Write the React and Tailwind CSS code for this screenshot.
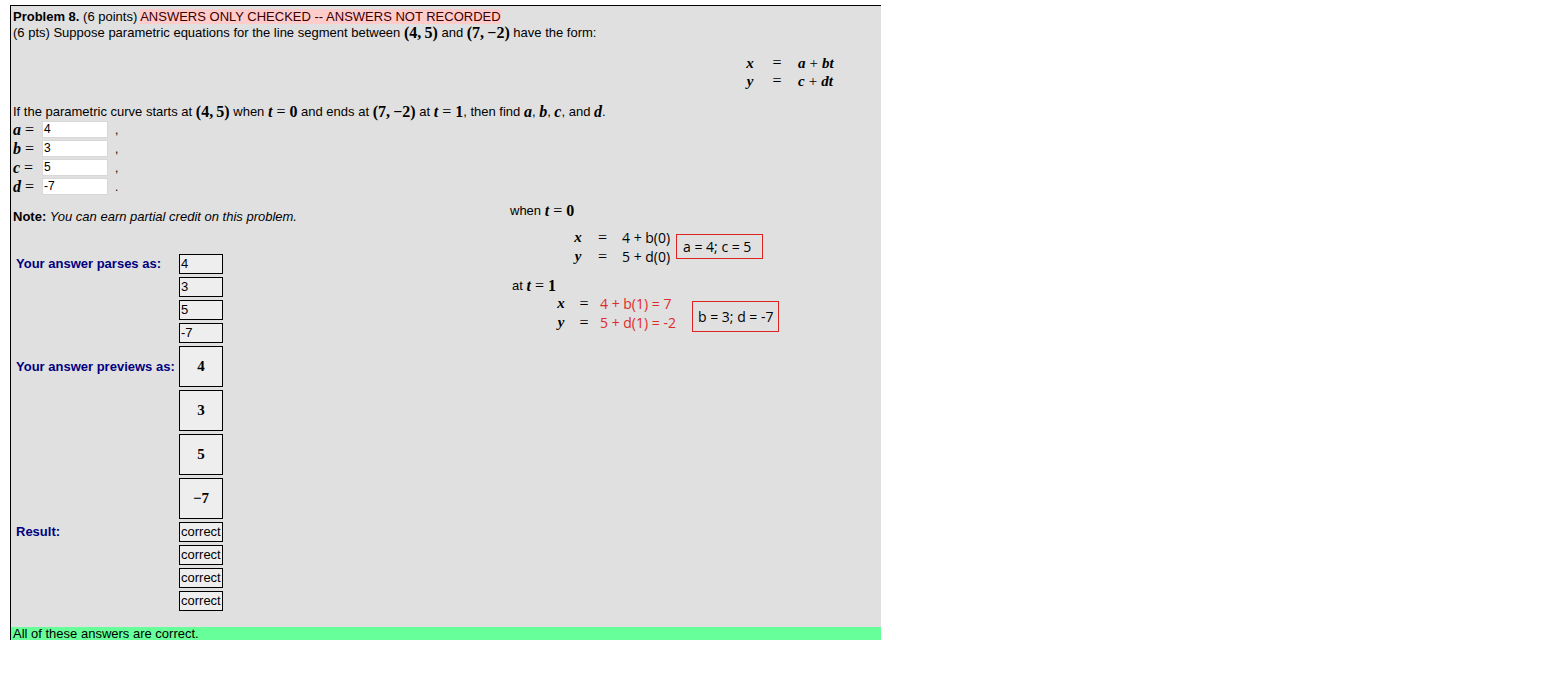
const sans = "font-['Liberation_Sans',Arial,sans-serif]";
const serif = "font-['Liberation_Serif','Times_New_Roman',serif]";
const open = "font-['Open_Sans','Noto_Sans',sans-serif]";

// bold upright math (numbers, brackets)
const Mb = ({ children }) => (
  <span className={`${serif} font-bold text-[16px]`}>{children}</span>
);
// bold italic math variable
const Mi = ({ children }) => (
  <span className={`${serif} font-bold italic text-[16px]`}>{children}</span>
);
const Eq = () => <span className={`${serif} text-[16px] mx-[4px]`}>=</span>;

const Blank = ({ name, value, punct }) => (
  <div className="flex h-[19px] items-center">
    <span className="w-[29px] leading-none">
      <Mi>{name}</Mi>
      <Eq />
    </span>
    <div className="h-[17px] w-[66px] border border-[#d8d8d8] bg-white pl-[1px] text-[12px] leading-[15px]">
      {value}
    </div>
    <span className="ml-[7px] text-[12px]">{punct}</span>
  </div>
);

const Cell = ({ h, children, center }) => (
  <div
    className={`flex w-[44px] ${h} items-center border border-black bg-[#eeeeee] ${
      center ? "justify-center" : "pl-[1px]"
    }`}
  >
    {children}
  </div>
);

const Group = ({ label, children }) => (
  <div className="flex">
    <div className="flex w-[163px] items-start">{label}</div>
    <div className="flex flex-col gap-[3px]">{children}</div>
  </div>
);

const Label = ({ children, h }) => (
  <div className={`flex ${h} items-center text-[13px] font-bold text-[#000080]`}>{children}</div>
);

const SolRows = ({ rows, exprW, red, gapX }) => (
  <div className="flex flex-col">
    {rows.map(([v, e]) => (
      <div key={v} className="flex h-[19px] items-center">
        <span className={`${serif} w-[14px] text-center text-[15px] font-bold italic`}>{v}</span>
        <span className={`${serif} ${gapX} text-center text-[16px]`}>=</span>
        <span className={`${open} ${exprW} text-[14px] ${red ? "text-[#e02a2a]" : "text-black"}`}>{e}</span>
      </div>
    ))}
  </div>
);

export default function App() {
  return (
    <div className={`${sans} min-h-[679px] w-[1545px] bg-white pt-[5px] pl-[10px] text-[13px] text-black`}>
      <div className="w-[871px] border-l border-t border-black bg-[#e0e0e0]">
        <div className="pl-[2px] pt-[3px]">
          <div className="h-[15px] leading-[15px]">
            <b>Problem 8.</b> (6 points){" "}
            <span className="bg-[#ffcccc] text-[#3a0000]">ANSWERS ONLY CHECKED -- ANSWERS NOT RECORDED</span>
          </div>
          <div className="flex h-[18px] items-center whitespace-pre">
            (6 pts) Suppose parametric equations for the line segment between <Mb>(4,{"\u2009"}5)</Mb> and{" "}
            <Mb>(7,{"\u2009"}−2)</Mb> have the form:
          </div>

          {/* display equation */}
          <div className="mt-[12px] ml-[731px] flex flex-col">
            {[
              ["x", "a", "bt"],
              ["y", "c", "dt"],
            ].map(([v, l, r]) => (
              <div key={v} className="flex h-[18px] items-center">
                <span className={`${serif} w-[12px] text-center text-[15px] font-bold italic`}>{v}</span>
                <span className={`${serif} w-[42px] text-center text-[16px]`}>=</span>
                <span className={`${serif} text-[15px] font-bold italic`}>
                  {l}
                  <span className="mx-[4px] font-normal not-italic">+</span>
                  {r}
                </span>
              </div>
            ))}
          </div>

          <div className="mt-[14px] flex h-[16px] items-center whitespace-pre">
            If the parametric curve starts at <Mb>(4,{"\u2009"}5)</Mb> when <Mi>t</Mi>
            <Eq />
            <Mb>0</Mb> and ends at <Mb>(7,{"\u2009"}−2)</Mb> at <Mi>t</Mi>
            <Eq />
            <Mb>1</Mb>, then find <Mi>a</Mi>, <Mi>b</Mi>, <Mi>c</Mi>, and <Mi>d</Mi>.
          </div>

          <Blank name="a" value="4" punct="," />
          <Blank name="b" value="3" punct="," />
          <Blank name="c" value="5" punct="," />
          <Blank name="d" value="-7" punct="." />

          <div className="flex">
            {/* left: note + answer table */}
            <div className="w-[497px]">
              <div className="mt-[13px] h-[16px] leading-[16px]">
                <b>Note:</b> <i>You can earn partial credit on this problem.</i>
              </div>

              <div className="mt-[29px] ml-[3px] flex flex-col gap-[3px]">
                <Group label={<Label h="h-[20px]">Your answer parses as:</Label>}>
                  {["4", "3", "5", "-7"].map((v, i) => (
                    <Cell key={i} h="h-[20px]">
                      {v}
                    </Cell>
                  ))}
                </Group>
                <Group label={<Label h="h-[41px]">Your answer previews as:</Label>}>
                  {["4", "3", "5", "−7"].map((v, i) => (
                    <Cell key={i} h="h-[41px]" center>
                      <span className={`${serif} text-[15px] font-bold`}>{v}</span>
                    </Cell>
                  ))}
                </Group>
                <Group label={<Label h="h-[20px]">Result:</Label>}>
                  {[0, 1, 2, 3].map((i) => (
                    <Cell key={i} h="h-[20px]">
                      correct
                    </Cell>
                  ))}
                </Group>
              </div>
            </div>

            {/* right: worked solution */}
            <div className="flex flex-col">
              <div className="mt-[6px] flex h-[18px] items-center whitespace-pre">
                when <Mi>t</Mi>
                <Eq />
                <Mb>0</Mb>
              </div>
              <div className="mt-[8px] ml-[61px] flex items-start">
                <SolRows
                  rows={[
                    ["x", "4 + b(0)"],
                    ["y", "5 + d(0)"],
                  ]}
                  gapX="w-[35px]"
                  exprW="w-[56px] pl-[2px]"
                />
                <div className={`${open} mt-[6px] flex h-[25px] w-[87px] items-center border border-[#dd2222] pl-[6px] text-[14px]`}>
                  a = 4; c = 5
                </div>
              </div>

              <div className="mt-[12px] ml-[2px] flex h-[16px] items-center whitespace-pre">
                at <Mi>t</Mi>
                <Eq />
                <Mb>1</Mb>
              </div>
              <div className="ml-[44px] flex items-start">
                <SolRows
                  rows={[
                    ["x", "4 + b(1) = 7"],
                    ["y", "5 + d(1) = -2"],
                  ]}
                  red
                  gapX="w-[32px]"
                  exprW="w-[92px]"
                />
                <div className={`${open} mt-[7px] flex h-[31px] w-[87px] items-center border border-[#dd2222] pl-[5px] text-[14px]`}>
                  b = 3; d = -7
                </div>
              </div>
            </div>
          </div>
        </div>

        <div className="mt-[16px] h-[13px] overflow-hidden bg-[#66ff99] pl-[2px] leading-[13px]">
          All of these answers are correct.
        </div>
      </div>
    </div>
  );
}
